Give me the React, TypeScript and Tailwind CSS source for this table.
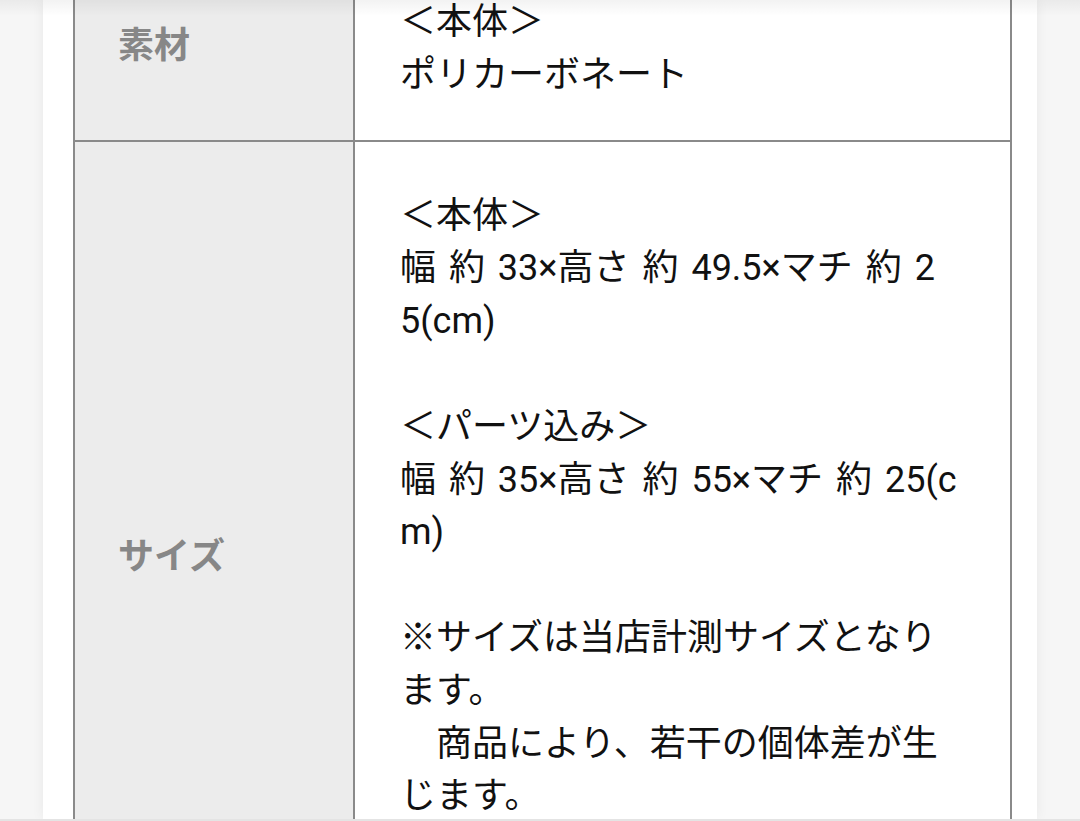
const jp = "font-['Roboto','Noto_Sans_CJK_JP',sans-serif]"

interface SpecRow {
  label: string
  lines: string[]
  pad: string
}

// 表示中の仕様表（上端は少しスクロールされた状態）。改行位置は元の画面どおり。
const rows: SpecRow[] = [
  { label: '素材', lines: ['＜本体＞', 'ポリカーボネート'], pad: 'pt-[43px] pb-[38px]' },
  {
    label: 'サイズ',
    lines: [
      '＜本体＞',
      '幅 約 33×高さ 約 49.5×マチ 約 2',
      '5(cm)',
      '',
      '＜パーツ込み＞',
      '幅 約 35×高さ 約 55×マチ 約 25(c',
      'm)',
      '',
      '※サイズは当店計測サイズとなり',
      'ます。',
      '　商品により、若干の個体差が生',
      'じます。',
      '',
      '予めご了承ください。',
    ],
    pad: 'pt-[48px] pb-[44px]',
  },
]

function Row({ row, first }: { row: SpecRow; first: boolean }) {
  return (
    <div className={['grid grid-cols-[280px_1fr]', first ? '' : 'border-t-2 border-[#8a8a8a]'].join(' ')}>
      <div className="flex items-center border-r-2 border-[#8a8a8a] bg-[#ececec] pl-[43px]">
        <span className="text-[36px] font-bold leading-[54px] text-[#878787]">{row.label}</span>
      </div>
      <div className={['pl-[45px]', row.pad].join(' ')}>
        <div className="whitespace-pre text-[36px] leading-[52.8px] tracking-normal text-[#111] [word-spacing:4px]">
          {row.lines.map((l, i) => (
            <div key={i}>{l === '' ? '\u00a0' : l}</div>
          ))}
        </div>
      </div>
    </div>
  )
}

export default function App() {
  return (
    <div className={`relative flex h-[821px] w-[1080px] flex-col overflow-hidden bg-[#f6f6f6] ${jp}`}>
      <div className="flex min-h-0 flex-1 justify-center">
        <div className="w-[994px] bg-white pl-[30px] shadow-[0_0_12px_rgba(0,0,0,0.06)]">
          <div className="-mt-[47px] w-[939px] border-x-2 border-[#8a8a8a]">
            {rows.map((r, i) => (
              <Row key={r.label} row={r} first={i === 0} />
            ))}
          </div>
        </div>
      </div>
      <div className="h-[2px] bg-[#e4e4e4]" />
      <div className="pointer-events-none absolute inset-x-0 top-0 h-4 bg-gradient-to-b from-black/[0.05] to-transparent" />
    </div>
  )
}
